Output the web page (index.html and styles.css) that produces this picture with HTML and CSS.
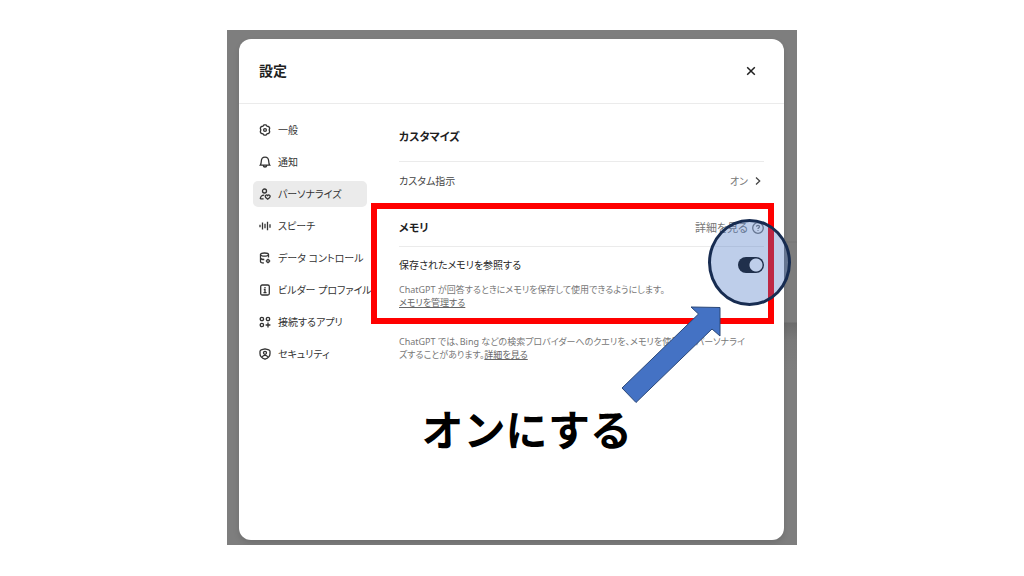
FILE: index.html
```html
<!DOCTYPE html>
<html lang="ja">
<head>
  <meta charset="UTF-8">
  <meta name="viewport" content="width=device-width, initial-scale=1">
  <title>設定</title>
  <link rel="stylesheet" href="styles.css">
</head>
<body>

<main class="backdrop">
  <section class="modal" aria-labelledby="modal-title">
    <header class="modal-header">
      <h1 id="modal-title">設定</h1>
      <button class="close" type="button" aria-label="閉じる">
        <svg viewBox="0 0 10 10"><path d="M1.2 1.2l7.6 7.6M8.8 1.2L1.2 8.8"/></svg>
      </button>
    </header>

    <div class="modal-body">
      <nav class="tabs">
        <button class="tab" type="button">
          <svg viewBox="0 0 12 12"><path d="M5 .9h2l1 1.300 1.800.4.9 1.600L10.200 6l.5 1.800-.9 1.600-1.800.4-1 1.300H5L4 9.800l-1.800-.4-.9-1.600L1.800 6l-.5-1.800.9-1.600L4 2.200z"/><circle cx="6" cy="6" r="1.400"/></svg>
          一般
        </button>
        <button class="tab" type="button">
          <svg viewBox="0 0 12 12"><path d="M1.300 9.200c.8-1.100.9-2.200 1-3.900C2.400 2.700 3.900 1.200 6 1.200s3.600 1.500 3.700 4.100c.1 1.700.2 2.800 1 3.900zM4.200 9.300c.2 1.200.9 1.700 1.800 1.700s1.600-.5 1.800-1.700"/></svg>
          通知
        </button>
        <button class="tab active" type="button">
          <svg viewBox="0 0 12 12"><circle cx="5.500" cy="3" r="2"/><path d="M1.300 10.900c0-2.300 1.500-3.800 3.900-3.800M1.300 10.900h3.300M8.700 11.200C7 10.200 6.200 9.300 6.200 8.300c0-1.400 1.700-1.800 2.500-.7.8-1.100 2.500-.7 2.500.7 0 1-.8 1.900-2.500 2.900z"/></svg>
          パーソナライズ
        </button>
        <button class="tab" type="button">
          <svg viewBox="0 0 12 12"><path d="M1 4.800v2.400M3.500 2.500v7M6 3.700v4.600M8.500 1.800v8.400M11 4.300v3.400"/></svg>
          スピーチ
        </button>
        <button class="tab" type="button">
          <svg viewBox="0 0 12 12"><ellipse cx="5.500" cy="2.600" rx="4" ry="1.600"/><path d="M1.500 2.600v6.800c0 .9 1.400 1.500 3.300 1.600M1.500 6c.2 1 1.700 1.500 3.800 1.500M9.500 2.600v3"/><circle cx="9" cy="9" r="1.300"/><path d="M9 6.800v.9M9 10.300v.9M6.800 9h.9M10.300 9h.9"/></svg>
          データ コントロール
        </button>
        <button class="tab" type="button">
          <svg viewBox="0 0 12 12"><rect x="1.700" y="1" width="8.600" height="10" rx="1.500"/><path d="M6 3v1.200M4.800 5.500H6v3M4.500 8.600h3"/></svg>
          ビルダー プロファイル
        </button>
        <button class="tab" type="button">
          <svg viewBox="0 0 12 12"><circle cx="2.900" cy="3" r="1.700"/><circle cx="9" cy="3" r="1.700"/><circle cx="2.900" cy="9" r="1.700"/><path d="M9 6.600v4.800M6.600 9h4.800"/></svg>
          接続するアプリ
        </button>
        <button class="tab" type="button">
          <svg viewBox="0 0 12 12"><path d="M6 .9c1.500.4 3 .7 4.300 1.300.5.3.7.8.7 1.400v2.200c0 2.600-2 4.400-5 5.400-3-1-5-2.800-5-5.400V3.600c0-.6.2-1.100.7-1.400C3 1.600 4.500 1.300 6 .9z"/><circle cx="6" cy="4.800" r="1.500"/><path d="M3.200 9c.6-1.300 1.600-1.700 2.800-1.700S8.200 7.700 8.800 9"/></svg>
          セキュリティ
        </button>
      </nav>

      <div class="panel">
        <h2>カスタマイズ</h2>
        <div class="row custom">
          <span>カスタム指示</span>
          <button class="value" type="button">オン
            <svg viewBox="0 0 12 12"><path d="M4 2.500L7.700 6 4 9.500"/></svg>
          </button>
        </div>

        <div class="section-head">
          <h2>メモリ</h2>
          <a class="learn" href="#">詳細を見る
            <svg viewBox="0 0 12 12"><circle cx="6" cy="6" r="5.300"/><path d="M4.500 4.800c0-2 3-1.900 3-.1C7.500 5.800 6 5.700 6 7M6 8.200v.9"/></svg>
          </a>
        </div>
        <div class="row memory">
          <label for="saved-memory">保存されたメモリを参照する</label>
          <input class="toggle" type="checkbox" id="saved-memory" checked>
        </div>
        <p>ChatGPT が回答するときにメモリを保存して使用できるようにします。<br><a href="#">メモリを管理する</a></p>
        <p class="note">ChatGPT では、Bing などの検索プロバイダーへのクエリを、メモリを使用してパーソナライ<br>ズすることがあります。<a href="#">詳細を見る</a></p>
      </div>
    </div>
  </section>

  <!-- annotations -->
  <div class="frame"></div>
  <div class="spot"></div>
  <svg class="arrow" viewBox="0 0 100 98"><path d="M99 1.500L70 1l7.500 7L1 82l14 14.500L91 23l8 7z"/></svg>
  <strong class="callout">オンにする</strong>
</main>

</body>
</html>
```
FILE: styles.css
```css
* {
  box-sizing: border-box;
}
body {
  margin: 0;
  padding: 30px 16px;
  background: #fff;
  color: #1f1f1f;
  font-family: "Noto Sans", "Noto Sans CJK JP", sans-serif;
  font-feature-settings: "palt";
  font-size: 10px;
  line-height: 16px;
}
h1, h2, p {
  margin: 0;
}
button {
  border: 0;
  padding: 0;
  background: none;
  color: inherit;
  font: inherit;
  font-feature-settings: inherit;
  cursor: pointer;
}
svg {
  flex: none;
  width: 12px;
  height: 12px;
  fill: none;
  stroke: currentColor;
  stroke-width: 1.3;
}

.backdrop {
  position: relative;
  max-width: 570px;
  margin: 0 auto;
  padding: 9px 13px 5px 12px;
  background:
    linear-gradient(transparent 211px, #757575 212px, #7d7d7d 213px, #7d7d7d 292px, #6c6c6c 293px, #7a7a7a 310px, transparent 340px) right / 13px 100% no-repeat,
    #7e7e7e;
}
.modal {
  min-height: 501px;
  border-radius: 12px;
  background: #fff;
  box-shadow: 0 3px 6px rgba(0, 0, 0, 0.12);
  clip-path: inset(-9px -13px -5px -12px);
}
.modal-header {
  display: flex;
  align-items: center;
  justify-content: space-between;
  height: 65px;
  padding: 0 26px 0 20px;
  border-bottom: 1px solid #ebebeb;
}
.modal-header h1 {
  font-size: 14px;
  line-height: 20px;
  font-weight: 600;
}
.close {
  display: flex;
  padding: 2px;
}
.close svg {
  width: 10px;
  height: 10px;
  stroke-width: 1.5;
}

.modal-body {
  display: flex;
  gap: 32px;
  padding: 13px 20px 0 14px;
}
.tabs {
  display: flex;
  flex: 0 0 114px;
  flex-direction: column;
  gap: 6px;
  min-width: 0;
}
.tab {
  display: flex;
  align-items: center;
  gap: 7px;
  height: 26px;
  padding: 0 6px;
  border-radius: 5px;
  color: #333;
  white-space: nowrap;
}
.tab.active {
  background: #ebebeb;
}

.panel {
  flex: 1;
  min-width: 0;
  padding-top: 10px;
}
h2 {
  font-size: 11px;
  line-height: 20px;
  font-weight: 600;
}
.row, .section-head {
  display: flex;
  align-items: center;
  justify-content: space-between;
}
.custom {
  height: 38px;
  margin-top: 14px;
  border-top: 1px solid #ebebeb;
  color: #444;
}
.value, .learn {
  display: flex;
  align-items: center;
  gap: 4px;
  color: #777;
  text-decoration: none;
}
.learn {
  font-size: 11px;
}
.value svg {
  stroke: #444;
}
.section-head {
  height: 48px;
  padding-top: 10px;
  border-bottom: 1px solid #ebebeb;
}
.memory {
  height: 36px;
}
.toggle {
  width: 26px;
  height: 16px;
  margin: 0;
  border-radius: 8px;
  appearance: none;
  background: radial-gradient(circle at 18px 8px, #fff 6px, #0d0d0d 7px);
}
.panel p {
  color: #777;
  font-size: 9px;
  line-height: 13px;
}
.panel p a {
  color: #666;
  text-underline-offset: 1px;
}
.panel .note {
  margin-top: 26px;
  white-space: nowrap;
}

.frame, .spot, .arrow, .callout {
  position: absolute;
  pointer-events: none;
}
.frame {
  top: 173px;
  right: 23px;
  width: 403px;
  height: 121px;
  border: 6px solid #f00;
}
.spot {
  top: 189px;
  right: 6px;
  width: 83px;
  height: 87px;
  border: 3px solid #172c51;
  border-radius: 50%;
  background: rgba(68, 114, 196, 0.35);
}
.arrow {
  top: 276px;
  right: 76px;
  width: 100px;
  height: 98px;
  fill: #4472c4;
  stroke: #2b4878;
  stroke-width: 1;
}
.callout {
  top: 368px;
  right: 165px;
  color: #000;
  font-family: "Noto Sans CJK JP", sans-serif;
  font-feature-settings: normal;
  font-size: 42px;
  line-height: 60px;
}
```
